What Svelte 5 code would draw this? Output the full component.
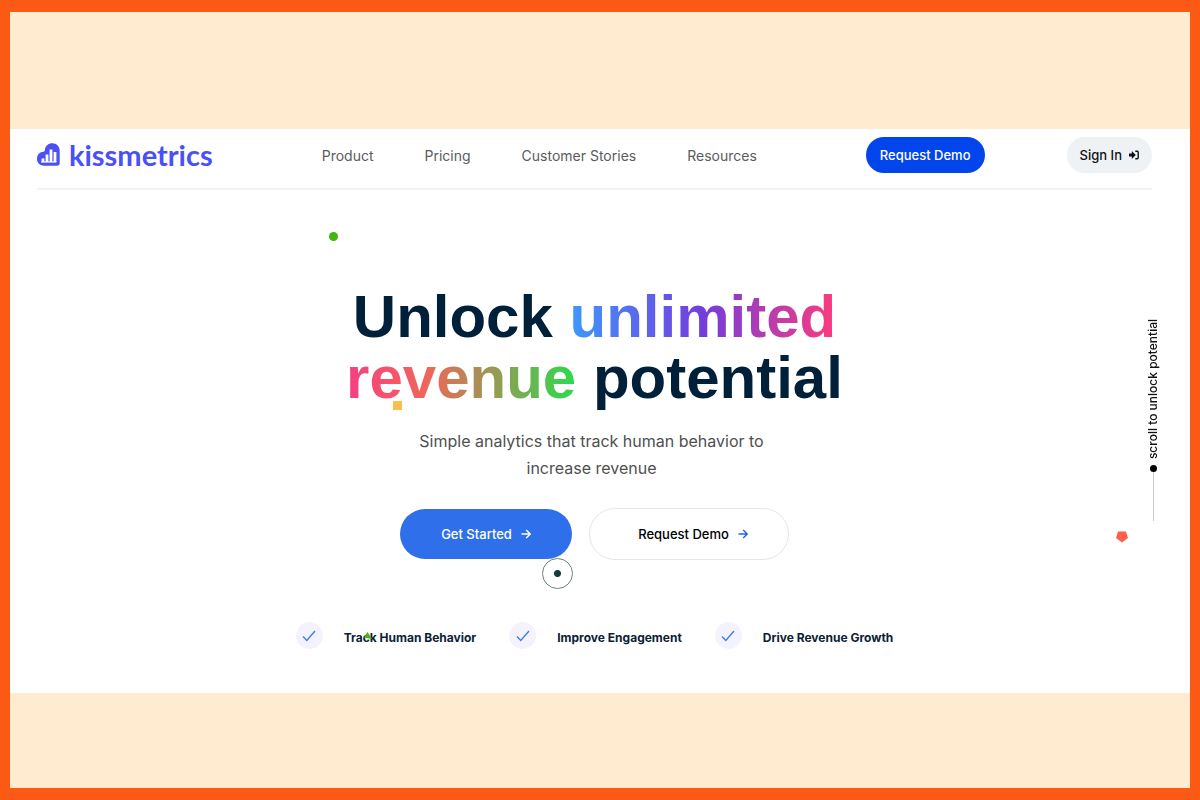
<script>
  const navLinks = ['Product', 'Pricing', 'Customer Stories', 'Resources'];
  const features = ['Track Human Behavior', 'Improve Engagement', 'Drive Revenue Growth'];
</script>

<div class="frame">
  <div class="site">
    <header class="header">
      <a href="#home" class="logo">
        <svg width="24" height="24" viewBox="0 0 24 24" aria-hidden="true">
          <path
            d="M7.800 7.200C8.300 3 11.300 0.300 15.300 0.300C19.800 0.300 22.700 3.400 22.700 8V20Q22.700 22.700 20 22.700H7C2.900 22.700 0 19.800 0 15.700C0 11.700 2.800 8.900 6.500 8.700Q7.700 8.500 7.800 7.200Z"
            fill="#4a50f7"
          />
          <path d="M6 15.500V19M10 11.500V19M14 6.500V19M18 9V19" stroke="#fff" stroke-width="2.800" />
          <path d="M4 19H19.400" stroke="#fff" stroke-width="1.200" />
        </svg>
        <span>kissmetrics</span>
      </a>

      <nav class="nav">
        {#each navLinks as link}
          <a href="#{link.toLowerCase().replace(' ', '-')}">{link}</a>
        {/each}
      </nav>

      <div class="header-actions">
        <button type="button" class="btn-demo">Request Demo</button>
        <button type="button" class="btn-signin">
          Sign In
          <svg width="10" height="10" viewBox="0 0 10 10" aria-hidden="true">
            <path d="M0 3.600H2.800V1L6.800 5L2.800 9V6.400H0Z" fill="#111" />
            <path d="M6.300 1.300H8.200Q9.200 1.300 9.200 2.300V7.700Q9.200 8.700 8.200 8.700H6.300" fill="none" stroke="#111" stroke-width="1.400" />
          </svg>
        </button>
      </div>
    </header>

    <main class="hero">
      <h1>
        Unlock <span class="grad-cool">unlimited</span><br />
        <span class="grad-warm">revenue</span> potential
      </h1>
      <p class="subtitle">Simple analytics that track human behavior to<br />increase revenue</p>

      <div class="cta">
        <button type="button" class="btn btn-primary">
          Get Started
          <svg width="10" height="10" viewBox="0 0 10 10" aria-hidden="true">
            <path d="M0.500 5H9M5.200 1L9.200 5L5.200 9" />
          </svg>
        </button>
        <button type="button" class="btn btn-outline">
          Request Demo
          <svg width="10" height="10" viewBox="0 0 10 10" aria-hidden="true">
            <path d="M0.500 5H9M5.200 1L9.200 5L5.200 9" />
          </svg>
        </button>
      </div>

      <ul class="features">
        {#each features as feature}
          <li>
            <span class="check">
              <svg width="14" height="12" viewBox="0 0 14 12" aria-hidden="true">
                <path d="M1 6.500L4.800 10.500L13 1" />
              </svg>
            </span>
            <span class="feature-text">{feature}</span>
          </li>
        {/each}
      </ul>

      <span class="shape dot"></span>
      <span class="shape square"></span>
      <span class="shape cursor"></span>
      <svg class="shape triangle" width="8" height="8" viewBox="0 0 8 8" aria-hidden="true">
        <path d="M3.500 0L8 7L0 5.500Z" fill="#43b515" />
      </svg>
    </main>

    <div class="scroll-hint">
      <span class="scroll-text">scroll to unlock potential</span>
      <span class="scroll-dot"></span>
      <span class="scroll-line"></span>
    </div>
    <svg class="pentagon" width="12" height="12" viewBox="0 0 12 12" aria-hidden="true">
      <path d="M2 0.500H10L12 7L6 11.500L0 7Z" fill="#fb604c" />
    </svg>
  </div>
</div>

<style>
  :global(body) {
    margin: 0;
  }

  .frame {
    box-sizing: border-box;
    min-height: 100vh;
    padding-top: 117px;
    border: solid #fc5a14;
    border-width: 12px 10px;
    background: #ffecd0;
    font-family: Inter, 'Liberation Sans', sans-serif;
  }

  .site {
    position: relative;
    padding: 0 38px 0 27px;
    background: #fff;
  }

  .header {
    display: flex;
    align-items: center;
    padding: 8px 0 15px;
    border-bottom: 2px solid #f3f3f3;
  }

  a {
    color: inherit;
    text-decoration: none;
  }

  button {
    font-family: inherit;
    cursor: pointer;
    white-space: nowrap;
  }

  .logo {
    display: flex;
    align-items: center;
    gap: 8px;
    color: #4a50f7;
    font-family: Lato, sans-serif;
    font-size: 29px;
    font-weight: 700;
    line-height: 36px;
  }

  .nav {
    display: flex;
    gap: 51px;
    margin-left: 109px;
    color: #5c5c5c;
    font-size: 14px;
    white-space: nowrap;
  }

  .header-actions {
    display: flex;
    flex: 1;
    justify-content: space-between;
    margin-left: 109px;
  }

  .btn-demo,
  .btn-signin {
    height: 36px;
    padding: 0 13px;
    border: none;
    border-radius: 18px;
    font-size: 13px;
    font-weight: 500;
  }

  .btn-demo {
    padding: 0 14px;
    background: #0345ec;
    color: #fff;
  }

  .btn-signin {
    display: flex;
    align-items: center;
    gap: 7px;
    background: #eef2f5;
    color: #111;
  }

  .hero {
    position: relative;
    display: flex;
    flex-direction: column;
    align-items: center;
    padding: 96px 0 39px;
  }

  h1 {
    margin: 0;
    color: #00203a;
    font-family: 'Liberation Sans', Arial, sans-serif;
    font-size: 60px;
    font-weight: 700;
    line-height: 61px;
    text-align: center;
  }

  .grad-cool,
  .grad-warm {
    background-clip: text;
    -webkit-background-clip: text;
    color: transparent;
  }

  .grad-cool {
    background-image: linear-gradient(90deg, #3e98fc, #733ddc 50%, #fd3b7e);
  }

  .grad-warm {
    background-image: linear-gradient(90deg, #f63f82, #f1655a 35%, #2adb4c);
  }

  .subtitle {
    margin: 20px 0 26px;
    padding-right: 6px;
    color: #505050;
    font-size: 16px;
    line-height: 27px;
    text-align: center;
  }

  .cta {
    display: flex;
    align-items: center;
    gap: 17px;
  }

  .btn {
    display: flex;
    align-items: center;
    justify-content: center;
    gap: 9px;
    border-radius: 26px;
    font-size: 13px;
    font-weight: 500;
  }

  .btn path {
    fill: none;
    stroke: currentColor;
    stroke-width: 1.4;
  }

  .btn-primary {
    width: 172px;
    height: 50px;
    border: none;
    background: #2f70ea;
    color: #fff;
  }

  .btn-outline {
    width: 200px;
    height: 52px;
    padding: 0 0 0 8px;
    border: 1px solid #e6e6e6;
    background: #fff;
    color: #000;
  }

  .btn-outline svg {
    color: #2464ea;
  }

  .features {
    display: flex;
    gap: 33px;
    margin: 62px 0 0;
    padding: 0;
    list-style: none;
  }

  .features li {
    display: flex;
    gap: 21px;
  }

  .check {
    display: flex;
    align-items: center;
    justify-content: center;
    width: 27px;
    height: 27px;
    border-radius: 50%;
    background: #f4f3fd;
  }

  .check path {
    fill: none;
    stroke: #3b82e8;
    stroke-width: 1.4;
  }

  .feature-text {
    color: #0b2135;
    font-size: 12px;
    font-weight: 700;
    line-height: 32px;
  }

  .shape {
    position: absolute;
    left: 50%;
  }

  .dot {
    top: 42px;
    width: 9px;
    height: 9px;
    margin-left: -266px;
    border-radius: 50%;
    background: #43b50f;
  }

  .square {
    top: 211px;
    width: 9px;
    height: 9px;
    margin-left: -202px;
    background: #fdbd48;
  }

  .cursor {
    box-sizing: border-box;
    top: 368px;
    width: 31px;
    height: 31px;
    margin-left: -53px;
    border: 1px solid #6f7f7c;
    border-radius: 50%;
    background: radial-gradient(circle, #103c3c 3px, transparent 4px);
  }

  .triangle {
    top: 442px;
    margin-left: -231px;
  }

  .scroll-hint {
    position: absolute;
    top: 190px;
    right: 29px;
    display: flex;
    flex-direction: column;
    align-items: center;
  }

  .scroll-text {
    color: #111;
    font-size: 12px;
    font-weight: 500;
    line-height: 16px;
    writing-mode: vertical-rl;
    transform: rotate(180deg);
  }

  .scroll-dot {
    width: 7px;
    height: 7px;
    margin-top: 6px;
    border-radius: 50%;
    background: #000;
  }

  .scroll-line {
    width: 1px;
    height: 49px;
    background: #ccc;
  }

  .pentagon {
    position: absolute;
    top: 402px;
    right: 62px;
  }
</style>
